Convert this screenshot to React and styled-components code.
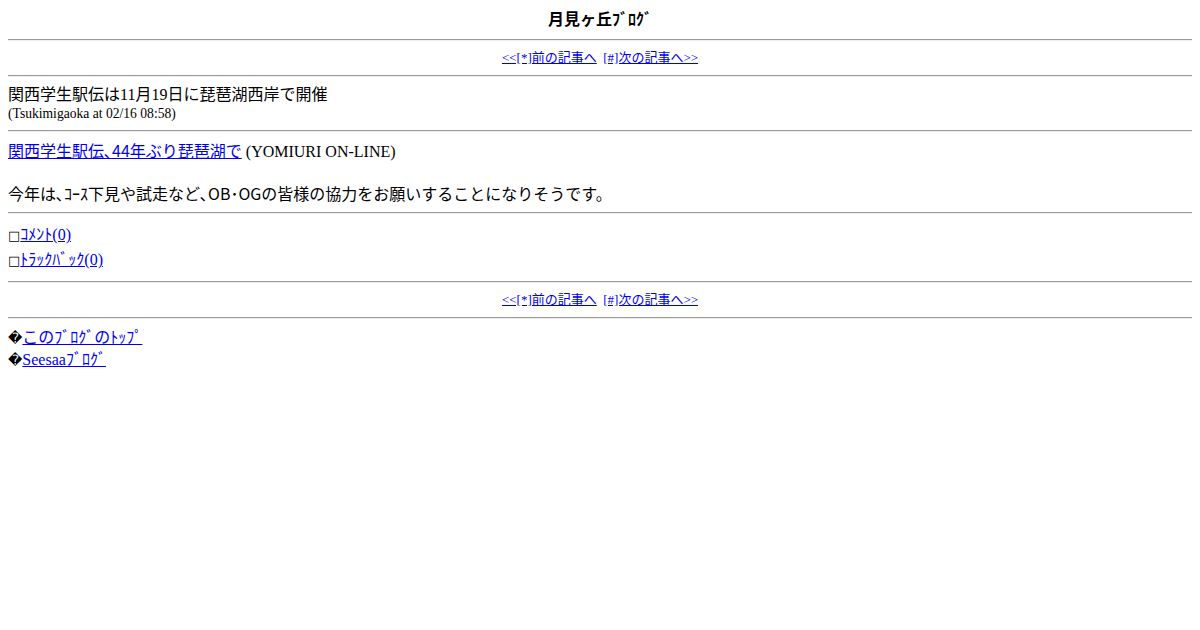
import React from "react";
import styled, { createGlobalStyle } from "styled-components";

const GlobalStyle = createGlobalStyle`
  body {
    margin: 8px;
    background: #ffffff;
    color: #000000;
    font-family: "Liberation Serif", "Noto Sans CJK JP", serif;
    font-size: 16px;
  }
  a {
    color: #0000ee;
  }
`;

const Page = styled.div`
  display: flex;
  flex-flow: column;
`;

const Title = styled.div`
  text-align: center;
  font-weight: bold;
  line-height: 23px;
`;

const Rule = styled.hr`
  margin: 8px 0;
  border: none;
  border-top: 1px solid #9a9a9a;
  border-bottom: 1px solid #eeeeee;
  height: 0;
`;

const Nav = styled.div`
  text-align: center;
  font-size: 13px;
  line-height: 18px;
`;

const Meta = styled.div`
  font-size: 13.6px;
  line-height: 17px;
`;

const Gothic = styled.span`
  font-family: "Noto Sans CJK JP", sans-serif;
`;

const Box = styled.span`
  font-family: "DejaVu Sans", sans-serif;
  font-size: 13px;
`;

const Mark = styled.span`
  font-family: "DejaVu Sans", sans-serif;
  font-size: 14px;
`;

const Line = styled.div`
  line-height: ${(p) => p.$h}px;
  height: ${(p) => p.$h}px;
  white-space: nowrap;
`;

function PageNav() {
  return (
    <Nav>
      <a href="#prev">&lt;&lt;[*]前の記事へ</a>&nbsp; <a href="#next">[#]次の記事へ&gt;&gt;</a>
    </Nav>
  );
}

export default function App() {
  return (
    <Page>
      <GlobalStyle />
      <Title>月見ヶ丘ﾌﾞﾛｸﾞ</Title>
      <Rule />
      <PageNav />
      <Rule />
      <Line $h={20}>関西学生駅伝は11月19日に琵琶湖西岸で開催</Line>
      <Meta>(Tsukimigaoka at 02/16 08:58)</Meta>
      <Rule />
      <Line $h={21}>
        <a href="#news">
          関西学生駅伝<Gothic>､44</Gothic>年ぶり琵琶湖で
        </a>{" "}
        (YOMIURI ON-LINE)
      </Line>
      <Line $h={21} />
      <Line $h={22}>
        今年は<Gothic>､ｺｰｽ</Gothic>下見や試走など<Gothic>､OB･OG</Gothic>の皆様の協力をお願いすることになりそうです。
      </Line>
      <Rule />
      <Line $h={25}>
        <Box>□</Box>
        <a href="#comment">ｺﾒﾝﾄ(0)</a>
      </Line>
      <Line $h={26}>
        <Box>□</Box>
        <a href="#trackback">ﾄﾗｯｸﾊﾞｯｸ(0)</a>
      </Line>
      <Rule />
      <PageNav />
      <Rule />
      <Line $h={21}>
        <Mark>{"\uFFFD"}</Mark>
        <a href="#top">このﾌﾞﾛｸﾞのﾄｯﾌﾟ</a>
      </Line>
      <Line $h={23}>
        <Mark>{"\uFFFD"}</Mark>
        <a href="#seesaa">Seesaaﾌﾞﾛｸﾞ</a>
      </Line>
    </Page>
  );
}
